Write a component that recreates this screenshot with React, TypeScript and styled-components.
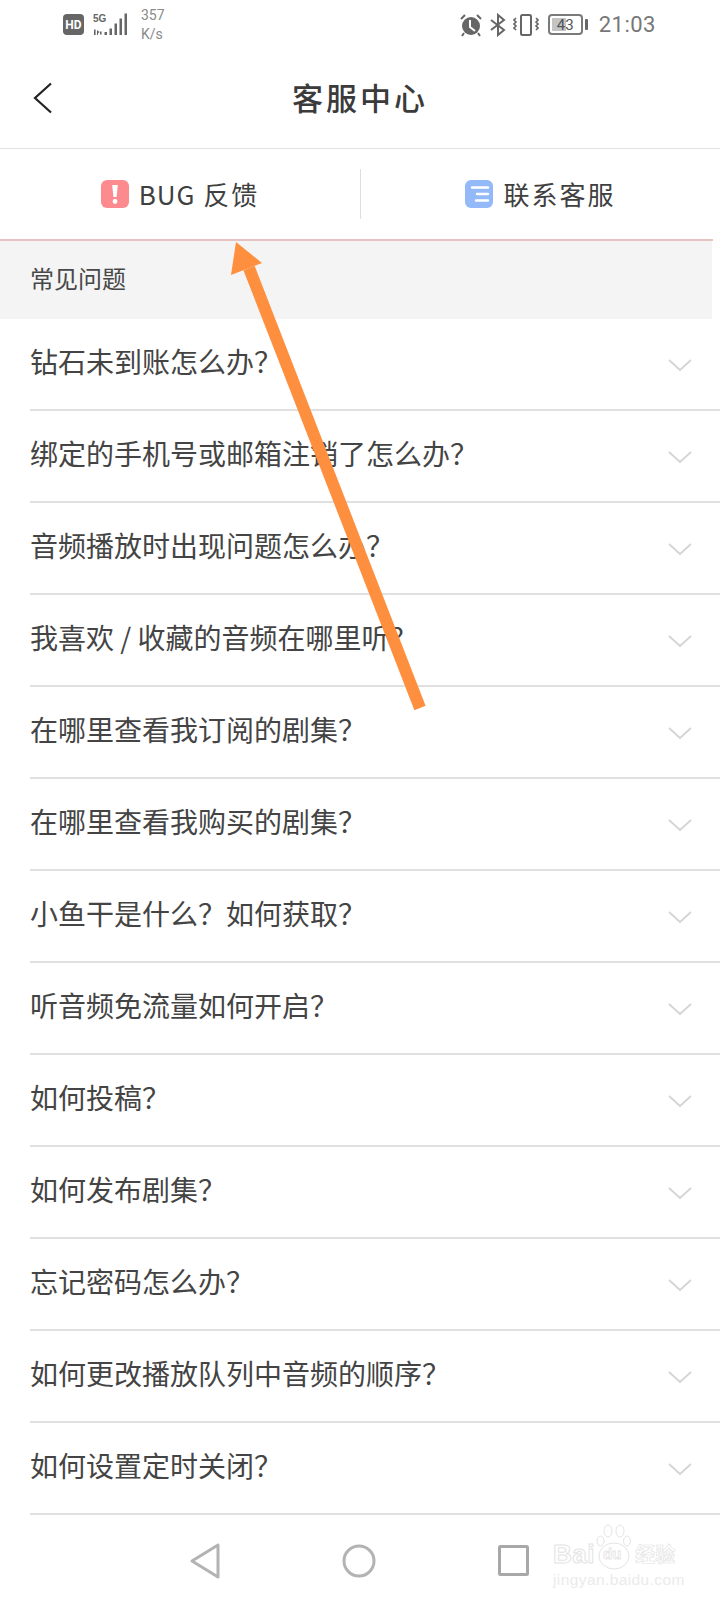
import React from "react";
import styled, { createGlobalStyle } from "styled-components";

const Global = createGlobalStyle`
  html, body { margin: 0; padding: 0; background: #fff; }
  body { font-family: "Noto Sans CJK SC", "Liberation Sans", sans-serif; }
`;

const Page = styled.div`
  position: relative;
  width: 720px;
  height: 1600px;
  overflow: hidden;
  background: #fff;
  display: flex;
  flex-direction: column;
`;

const StatusBar = styled.div`
  height: 49px;
  box-sizing: border-box;
  display: flex;
  align-items: center;
  justify-content: space-between;
  padding: 0 64px 0 63px;
  color: #6a6a6a;
  font-family: "Roboto", "Liberation Sans", sans-serif;
`;

const StatusGroup = styled.div`
  display: flex;
  align-items: center;
`;

const HdBadge = styled.span`
  width: 21px;
  height: 21px;
  border-radius: 4px;
  background: #666;
  color: #fff;
  font-size: 12px;
  font-weight: 700;
  display: flex;
  align-items: center;
  justify-content: center;
`;

const Speed = styled.span`
  font-size: 14px;
  line-height: 19px;
  color: #8a8a8a;
  margin-left: 13px;
  text-align: left;
`;

const Battery = styled.span`
  position: relative;
  width: 35px;
  height: 21px;
  box-sizing: border-box;
  border: 2px solid #7a7a7a;
  border-radius: 4px;
  margin-left: 9px;
  margin-right: 16px;
  font-size: 15px;
  color: #555;
  display: flex;
  align-items: center;
  justify-content: center;
  &::before {
    content: "";
    position: absolute;
    left: 2px;
    top: 2px;
    bottom: 2px;
    width: 14px;
    background: #c4c4c4;
  }
  &::after {
    content: "";
    position: absolute;
    right: -7px;
    top: 3px;
    width: 3px;
    height: 11px;
    border-radius: 1px;
    background: #666;
  }
`;

const BatteryValue = styled.span`
  position: relative;
`;

const Time = styled.span`
  font-size: 22px;
  letter-spacing: 0.5px;
  color: #777;
`;

const NavBar = styled.header`
  position: relative;
  height: 100px;
  box-sizing: border-box;
  border-bottom: 1.5px solid #e2e2e2;
  display: flex;
  align-items: center;
  justify-content: center;
`;

const BackButton = styled.span`
  position: absolute;
  left: 32px;
  top: 33px;
  display: flex;
`;

const Title = styled.h1`
  margin: 0 0 4px;
  font-family: "Noto Sans CJK SC", serif;
  font-size: 31px;
  font-weight: 500;
  letter-spacing: 3px;
  color: #3b3b3b;
`;

const Tabs = styled.nav`
  height: 92px;
  box-sizing: border-box;
  border-bottom: 2px solid #e6c3c1;
  margin-right: 7px;
  display: flex;
  align-items: center;
`;

const Tab = styled.div<{ $divider?: boolean }>`
  width: 360px;
  height: 50px;
  flex: none;
  box-sizing: border-box;
  border-left: ${(p) => (p.$divider ? "1px solid #dedede" : "none")};
  display: flex;
  align-items: center;
  justify-content: center;
  gap: 10px;
  font-size: 26px;
  color: #404040;
  letter-spacing: 2px;
`;

const TabLabel = styled.span`
  position: relative;
  top: -1px;
`;

const LatinWord = styled.span`
  letter-spacing: 1px;
`;

const TabIcon = styled.svg`
  flex: none;
`;

const SectionHead = styled.div`
  height: 78px;
  box-sizing: border-box;
  margin-right: 8px;
  background: #f4f4f4;
  padding: 0 0 6px 30px;
  display: flex;
  align-items: center;
  font-size: 24px;
  color: #484848;
`;

const List = styled.ul`
  margin: 0;
  padding: 0;
  list-style: none;
`;

const Row = styled.li`
  height: 92px;
  box-sizing: border-box;
  margin-left: 30px;
  padding-right: 27px;
  border-bottom: 2px solid #e0e0e0;
  display: flex;
  align-items: center;
  justify-content: space-between;
  font-size: 28px;
  color: #444;
`;

const RowText = styled.span`
  position: relative;
  top: -3px;
`;

const ChevronIcon = styled.svg`
  flex: none;
  margin-top: 2px;
`;

const NavKeys = styled.div`
  flex: 1;
  display: flex;
  align-items: center;
  padding: 6px 0 0 190px;
  gap: 122px;
`;

const Arrow = styled.svg`
  position: absolute;
  left: 0;
  top: 0;
  pointer-events: none;
`;

const Watermark = styled.div`
  position: absolute;
  left: 553px;
  top: 1524px;
  width: 128px;
  height: 64px;
  color: #fff;
  font-family: "Liberation Sans", sans-serif;
`;

const WatermarkPaw = styled.svg`
  position: absolute;
  left: 43px;
  top: 0;
`;

const WatermarkLine = styled.div`
  position: absolute;
  left: 0;
  top: 14px;
  display: flex;
  align-items: center;
  white-space: nowrap;
  -webkit-text-stroke: 1px #e4e4e4;
  font-weight: 700;
`;

const WatermarkBai = styled.span`
  font-size: 26px;
  line-height: 32px;
  letter-spacing: 0.5px;
`;

const WatermarkDu = styled.span`
  font-size: 15px;
  line-height: 32px;
  margin-left: 8px;
  -webkit-text-stroke: 0.8px #e4e4e4;
`;

const WatermarkCjk = styled.span`
  font-family: "Noto Sans CJK SC", sans-serif;
  font-size: 20px;
  line-height: 32px;
  margin-left: 14px;
  -webkit-text-stroke: 0.7px #e4e4e4;
`;

const WatermarkSub = styled.div`
  position: absolute;
  left: 0;
  top: 47px;
  font-size: 15.5px;
  line-height: 18px;
  letter-spacing: 0.4px;
  color: #ebebeb;
  white-space: nowrap;
`;

const Q = "\uFF1F";

const questions = [
  `钻石未到账怎么办${Q}`,
  `绑定的手机号或邮箱注销了怎么办${Q}`,
  `音频播放时出现问题怎么办${Q}`,
  `我喜欢 / 收藏的音频在哪里听${Q}`,
  `在哪里查看我订阅的剧集${Q}`,
  `在哪里查看我购买的剧集${Q}`,
  `小鱼干是什么${Q}如何获取${Q}`,
  `听音频免流量如何开启${Q}`,
  `如何投稿${Q}`,
  `如何发布剧集${Q}`,
  `忘记密码怎么办${Q}`,
  `如何更改播放队列中音频的顺序${Q}`,
  `如何设置定时关闭${Q}`,
];

const Chevron = () => (
  <ChevronIcon width="26" height="14" viewBox="0 0 26 14" fill="none" stroke="#d4d4d4" strokeWidth="1.8">
    <path d="M2 2l11 10L24 2" />
  </ChevronIcon>
);

export default function App() {
  return (
    <Page>
      <Global />
      <StatusBar>
        <StatusGroup>
          <HdBadge>HD</HdBadge>
          <svg width="35" height="23" viewBox="0 0 35 23" style={{ marginLeft: 9 }}>
            <text x="0" y="9" fontSize="10" fontWeight="700" fill="#666" fontFamily="Liberation Sans">5G</text>
            <path d="M1 16.5h1.6V22H1zM4 17l2.5 2L5 20.5V22H4zM7 18.5h1.6v3H7zM11.5 19h2.5v3h-2.5zM16.5 15.5H19V22h-2.5zM21.5 10.5H24V22h-2.5zM26.5 5.5H29V22h-2.5zM31.5 .5H34V22h-2.5z" fill="#666" />
          </svg>
          <Speed>357<br />K/s</Speed>
        </StatusGroup>
        <StatusGroup>
          <svg width="24" height="24" viewBox="0 0 24 24">
            <circle cx="12" cy="13" r="9" fill="#666" />
            <path d="M11 7v7l5 4" stroke="#fff" strokeWidth="2" fill="none" />
            <path d="M2 6l4-4M22 6l-4-4M5 20l-2 3M19 20l2 3" stroke="#666" strokeWidth="2" />
          </svg>
          <svg width="16" height="24" viewBox="0 0 16 24" fill="none" stroke="#666" strokeWidth="2" style={{ marginLeft: 7 }}>
            <path d="M1 7l13 10-6 5V2l6 5L1 17" />
          </svg>
          <svg width="26" height="22" viewBox="0 0 26 22" fill="none" stroke="#666" strokeWidth="1.6" style={{ marginLeft: 7 }}>
            <rect x="8" y="1" width="10" height="20" rx="1.5" strokeWidth="2" />
            <path d="M3 4L1 6l2 2-2 2 2 2-2 2 2 2M23 4l2 2-2 2 2 2-2 2 2 2-2 2" />
          </svg>
          <Battery><BatteryValue>43</BatteryValue></Battery>
          <Time>21:03</Time>
        </StatusGroup>
      </StatusBar>

      <NavBar>
        <BackButton>
          <svg width="20" height="32" viewBox="0 0 20 32" fill="none" stroke="#222" strokeWidth="2.2">
            <path d="M19 1.5L3 16l16 14.5" />
          </svg>
        </BackButton>
        <Title>客服中心</Title>
      </NavBar>

      <Tabs>
        <Tab>
          <TabIcon width="28" height="28" viewBox="0 0 28 28">
            <rect width="28" height="28" rx="6" fill="#fd8a8e" />
            <path d="M11.2 5h5.6l-1.2 12h-3.2z" fill="#fff" />
            <circle cx="14" cy="21.5" r="2.4" fill="#fff" />
          </TabIcon>
          <TabLabel><LatinWord>BUG</LatinWord> 反馈</TabLabel>
        </Tab>
        <Tab $divider>
          <TabIcon width="28" height="28" viewBox="0 0 28 28">
            <rect width="28" height="28" rx="6" fill="#93b9f8" />
            <path d="M7 7.5h16M12 14h11M11 20.5h12" stroke="#fff" strokeWidth="2.4" strokeLinecap="round" />
          </TabIcon>
          <TabLabel>联系客服</TabLabel>
        </Tab>
      </Tabs>

      <SectionHead>常见问题</SectionHead>

      <List>
        {questions.map((q) => (
          <Row key={q}>
            <RowText>{q}</RowText>
            <Chevron />
          </Row>
        ))}
      </List>

      <NavKeys>
        <svg width="30" height="36" viewBox="0 0 30 36" fill="none" stroke="#b3b3b3" strokeWidth="3" strokeLinejoin="round">
          <path d="M28 2v32L2 18z" />
        </svg>
        <svg width="34" height="34" viewBox="0 0 34 34" fill="none" stroke="#b3b3b3" strokeWidth="3">
          <circle cx="17" cy="17" r="15" />
        </svg>
        <svg width="31" height="31" viewBox="0 0 31 31" fill="none" stroke="#a8a8a8" strokeWidth="3" strokeLinejoin="round">
          <rect x="1.5" y="1.5" width="28" height="28" rx="1" />
        </svg>
      </NavKeys>

      <Watermark>
        <WatermarkPaw width="36" height="50" viewBox="0 0 36 50" fill="#fff" stroke="#e4e4e4" strokeWidth="1">
          <ellipse cx="4.5" cy="17" rx="3.5" ry="5" />
          <ellipse cx="12" cy="7" rx="4" ry="6" />
          <ellipse cx="24" cy="7" rx="4" ry="6" />
          <ellipse cx="31" cy="17" rx="3.5" ry="5" />
          <ellipse cx="18" cy="32" rx="15" ry="13" />
        </WatermarkPaw>
        <WatermarkLine>
          <WatermarkBai>Bai</WatermarkBai>
          <WatermarkDu>du</WatermarkDu>
          <WatermarkCjk>经验</WatermarkCjk>
        </WatermarkLine>
        <WatermarkSub>jingyan.baidu.com</WatermarkSub>
      </Watermark>

      <Arrow width="720" height="1600" viewBox="0 0 720 1600">
        <path d="M420 708L249 268" stroke="#fd8f3f" strokeWidth="12" fill="none" />
        <path d="M236 242L231 275L262 263z" fill="#fd8f3f" />
      </Arrow>
    </Page>
  );
}
